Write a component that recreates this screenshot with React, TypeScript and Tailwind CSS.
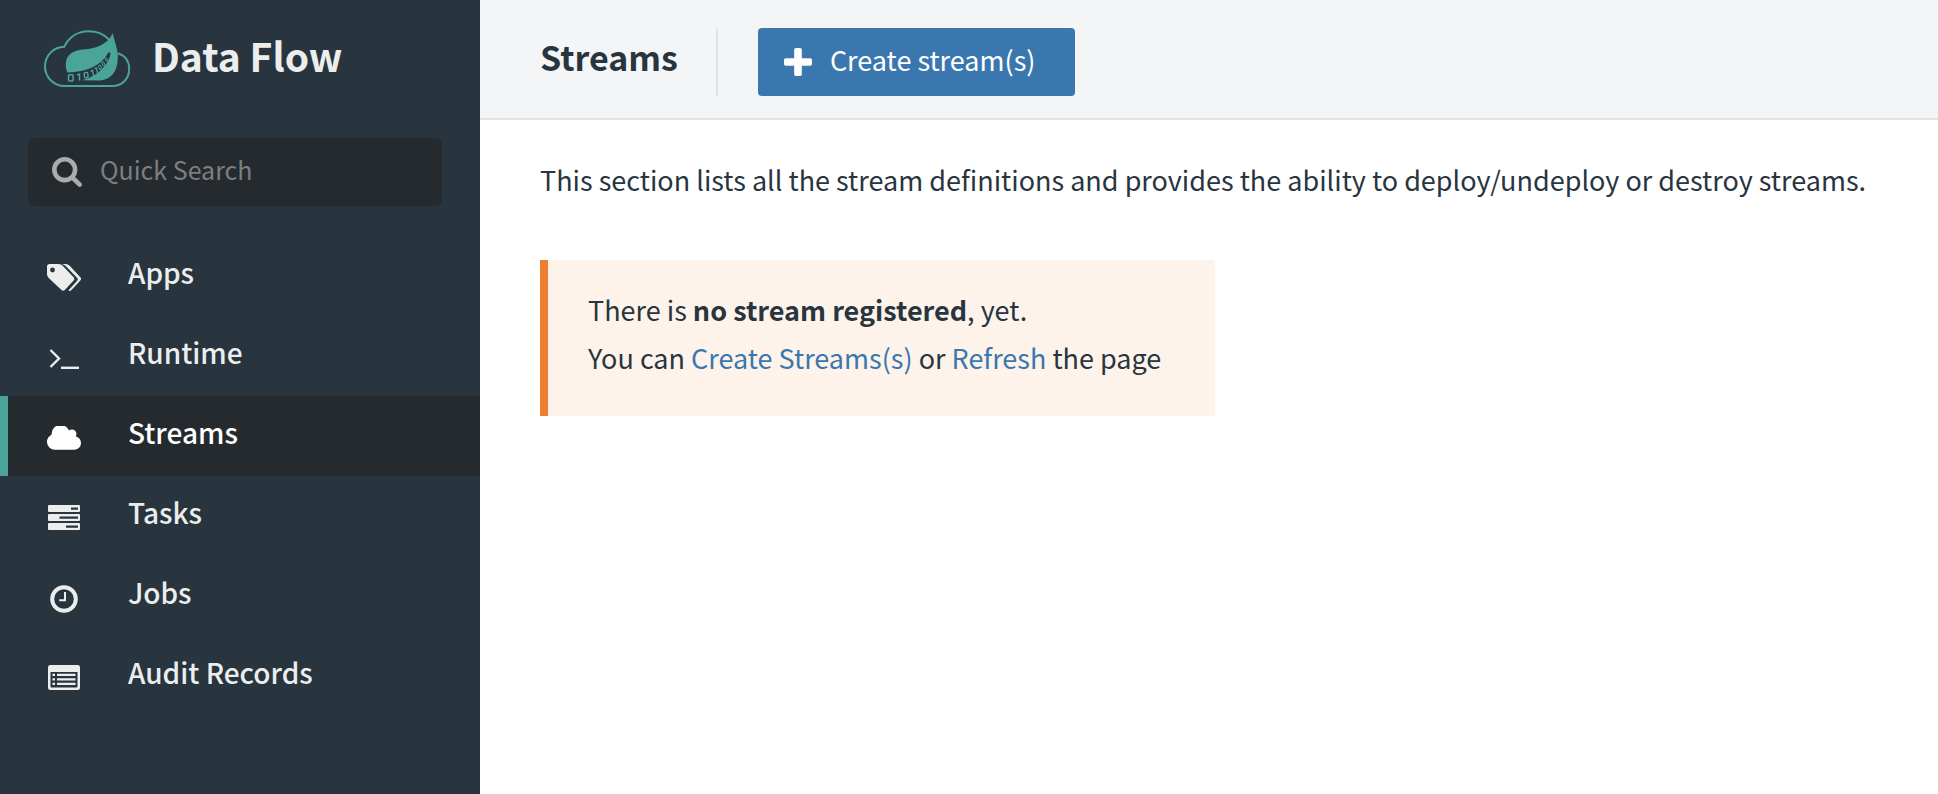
import type { ReactNode } from "react";

function Icon({ box, className, children }: { box: string; className: string; children: ReactNode }) {
  return (
    <svg viewBox={box} className={className} fill="currentColor" aria-hidden="true">
      {children}
    </svg>
  );
}

function Logo() {
  return (
    <svg viewBox="0 0 88 60" className="h-[60px] w-[88px] shrink-0 text-[#4aa49a]" aria-hidden="true">
      <path
        d="M73.500 25.200C81 27 85.200 33 85.200 41C85.200 51 78 58 68.500 58H21C9.500 58 1 49 1 38.500C1 27.500 9.500 19 20.200 18.800C25 9 34 3.200 44.500 3.200C53 3.200 60 6 65.500 12"
        fill="none"
        stroke="currentColor"
        strokeWidth="2"
      />
      <path
        fill="currentColor"
        d="M68.700 5.300C70 12 73.800 20 73.800 29C73.800 44 67 52.600 53 52.600L37.700 52.300C52 49 64 38 66.300 26.500C66.600 24.200 64.800 23.600 63.700 25.500C56.500 38 43 43.800 23.300 44.500C20.800 37 21.200 30.500 26 26.200C31 21.800 38 21.700 44.300 21C54.500 19.800 64.800 14.500 68.700 5.300Z"
      />
      <g fill="none" stroke="currentColor" strokeWidth="1.500">
        <rect x="24.500" y="46.800" width="4.600" height="6.200" rx="1" />
        <path d="M33 46.800L35.500 46.200V52.600" />
        <rect x="40.300" y="44.500" width="3.600" height="5.200" rx="1" transform="rotate(-10 42 47)" strokeWidth="1.400" />
        <path d="M46.500 43.300L48.500 42.300L49.500 47.800M50.500 40.800L52.200 39.700L53.500 45" strokeWidth="1.300" />
        <ellipse cx="56" cy="39.300" rx="1.200" ry="2.300" transform="rotate(-20 56 39.300)" strokeWidth="1" />
        <ellipse cx="59.300" cy="35.700" rx="1.100" ry="2.100" transform="rotate(-25 59.300 35.700)" strokeWidth="1" />
        <ellipse cx="62.300" cy="31.500" rx="0.900" ry="1.800" transform="rotate(-30 62.300 31.500)" strokeWidth="0.900" />
      </g>
    </svg>
  );
}

const items: { label: string; active?: boolean; icon: ReactNode }[] = [
  {
    label: "Apps",
    icon: (
      <Icon box="0 0 36 30" className="h-[30px] w-[36px]">
        <path
          fillRule="evenodd"
          d="M3.500 1H12.500C14 1 15.800 1.800 16.900 2.900L27.600 14.200C28.600 15.200 28.600 16.500 27.600 17.500L18.800 27C17.800 28 16.500 28 15.500 27L3.200 15.500C2 14.300 1 12.500 1 11V3.500C1 2 2 1 3.500 1ZM6.500 4.600A2.400 2.400 0 1 0 6.500 9.400A2.400 2.400 0 1 0 6.500 4.600Z"
        />
        <path d="M15 1H19.500C21 1 22.800 1.800 23.900 2.900L34.300 14.200C35.300 15.200 35.300 16.500 34.300 17.500L25.500 27C24.500 28 23.500 28.300 22.500 27.300L31 18C32 17 32 15.700 31 14.700L20.200 3.400C19 2.200 17 1.200 15 1Z" />
      </Icon>
    ),
  },
  {
    label: "Runtime",
    icon: (
      <Icon box="0 0 36 30" className="h-[30px] w-[36px]">
        <path d="M4.500 7L13 15.500L4.500 24" fill="none" stroke="currentColor" strokeWidth="2.400" />
        <rect x="15" y="23.600" width="18" height="2.400" />
      </Icon>
    ),
  },
  {
    label: "Streams",
    active: true,
    icon: (
      <Icon box="64 256 1920 1280" className="h-[25px] w-[34px]">
        <path d="M1984 1152q0 159-112.500 271.500t-271.500 112.500h-1088q-185 0-316.500-131.500t-131.500-316.500q0-132 71-241.500t187-163.500q-2-28-2-43 0-212 150-362t362-150q158 0 286.500 88t187.500 230q70-62 166-62 106 0 181 75t75 181q0 75-41 138 129 30 213 134.500t84 239.500z" />
      </Icon>
    ),
  },
  {
    label: "Tasks",
    icon: (
      <Icon box="0 0 36 30" className="h-[30px] w-[36px]">
        <path
          fillRule="evenodd"
          d="M3 2H33Q34 2 34 3V8Q34 9 33 9H3Q2 9 2 8V3Q2 2 3 2ZM25 4.500V6.800H32V4.500ZM3 11H33Q34 11 34 12V17Q34 18 33 18H3Q2 18 2 17V12Q2 11 3 11ZM13.500 13.500V15.800H32V13.500ZM3 20H33Q34 20 34 21V26Q34 27 33 27H3Q2 27 2 26V21Q2 20 3 20ZM20 22.500V24.800H32V22.500Z"
        />
      </Icon>
    ),
  },
  {
    label: "Jobs",
    icon: (
      <Icon box="0 0 36 30" className="h-[30px] w-[36px]">
        <circle cx="18" cy="16" r="11.800" fill="none" stroke="currentColor" strokeWidth="4" />
        <path d="M19 9V17.200H13.200" fill="none" stroke="currentColor" strokeWidth="2" />
      </Icon>
    ),
  },
  {
    label: "Audit Records",
    icon: (
      <Icon box="0 0 36 30" className="h-[30px] w-[36px]">
        <path
          fillRule="evenodd"
          d="M4.500 2H31.500Q34 2 34 4.500V24.500Q34 27 31.500 27H4.500Q2 27 2 24.500V4.500Q2 2 4.500 2ZM4.500 9V23.500Q4.500 24.500 5.500 24.500H30.500Q31.500 24.500 31.500 23.500V9Z"
        />
        <path d="M6.500 10.800H9V13H6.500ZM11 10.800H29.500V13H11ZM6.500 15.300H9V17.500H6.500ZM11 15.300H29.500V17.500H11ZM6.500 19.800H9V22H6.500ZM11 19.800H29.500V22H11Z" />
      </Icon>
    ),
  },
];

function Sidebar() {
  return (
    <aside className="flex w-[480px] shrink-0 flex-col bg-[#28353f] text-[#eceeee]">
      <a href="#home" className="flex items-center gap-5 px-11 pt-7 pb-[50px]">
        <Logo />
        <span className="pb-1.5 text-[39px] leading-[54px] font-bold">Data Flow</span>
      </a>
      <label className="mr-[38px] ml-7 flex h-[68px] items-center rounded-md bg-[#252a2e] px-6">
        <Icon box="64 128 1664 1664" className="h-[30px] w-[30px] shrink-0 text-[#a9abac]">
          <path d="M1216 832q0-185-131.500-316.500t-316.500-131.500-316.500 131.500-131.500 316.500 131.500 316.500 316.500 131.500 316.500-131.500 131.500-316.500zm512 832q0 52-38 90t-90 38q-54 0-90-38l-343-342q-179 124-399 124-143 0-273.500-55.500t-225-150-150-225-55.500-273.500 55.500-273.500 150-225 225-150 273.500-55.500 273.500 55.500 225 150 150 225 55.500 273.500q0 220-124 399l343 343q37 37 37 90z" />
        </Icon>
        <input
          type="search"
          aria-label="Quick Search"
          placeholder="Quick Search"
          className="ml-[18px] h-[64px] min-w-0 flex-1 bg-transparent pb-1.5 text-[25px] outline-none placeholder:text-[#7c7f82]"
        />
      </label>
      <nav className="pt-[30px]">
        {items.map((item) => (
          <a
            key={item.label}
            href={"#" + item.label.toLowerCase().replace(" ", "-")}
            aria-current={item.active ? "page" : undefined}
            className={
              item.active
                ? "flex h-20 items-center border-l-8 border-[#4aa49a] bg-[#252a2e] pl-[38px] text-white"
                : "flex h-20 items-center border-l-8 border-transparent pl-[38px]"
            }
          >
            <span className="flex w-9 justify-center pt-1">{item.icon}</span>
            <span className="pb-2 pl-[46px] text-[28px] leading-10 font-medium">{item.label}</span>
          </a>
        ))}
      </nav>
    </aside>
  );
}

export default function App() {
  return (
    <div className="flex min-h-screen bg-white font-['Noto_Sans_CJK_SC',sans-serif] text-[#28353f]">
      <Sidebar />
      <main className="min-w-0 flex-1">
        <header className="flex items-center border-b-2 border-[#dfe5e7] bg-[#f4f5f7] px-[60px] pt-7 pb-[22px]">
          <h1 className="pr-[38px] pb-2.5 text-[34px] leading-[56px] font-bold">Streams</h1>
          <div className="border-l-2 border-[#dfe5e7] pl-10">
            <button
              type="button"
              className="flex h-[68px] items-center gap-[18px] rounded bg-[#3b77af] pr-10 pl-[26px] text-[27px] leading-10 text-white"
            >
              <Icon box="192 128 1408 1408" className="h-7 w-7">
                <path d="M1600 736v192q0 40-28 68t-68 28h-416v416q0 40-28 68t-68 28h-192q-40 0-68-28t-28-68v-416h-416q-40 0-68-28t-28-68v-192q0-40 28-68t68-28h416v-416q0-40 28-68t68-28h192q40 0 68 28t28 68v416h416q40 0 68 28t28 68z" />
              </Icon>
              <span className="pb-1">Create stream(s)</span>
            </button>
          </div>
        </header>
        <div className="px-[60px] pt-9 text-[27px] leading-[48px]">
          <p>This section lists all the stream definitions and provides the ability to deploy/undeploy or destroy streams.</p>
          <div className="mt-14 w-fit border-l-8 border-[#ee7f31] bg-[#fdf3ea] pt-[26px] pr-[54px] pb-[34px] pl-10">
            <p>
              There is <strong className="font-bold">no stream registered</strong>, yet.
            </p>
            <p>
              You can{" "}
              <a href="#create" className="text-[#3b77af]">
                Create Streams(s)
              </a>{" "}
              or{" "}
              <a href="#refresh" className="text-[#3b77af]">
                Refresh
              </a>{" "}
              the page
            </p>
          </div>
        </div>
      </main>
    </div>
  );
}
